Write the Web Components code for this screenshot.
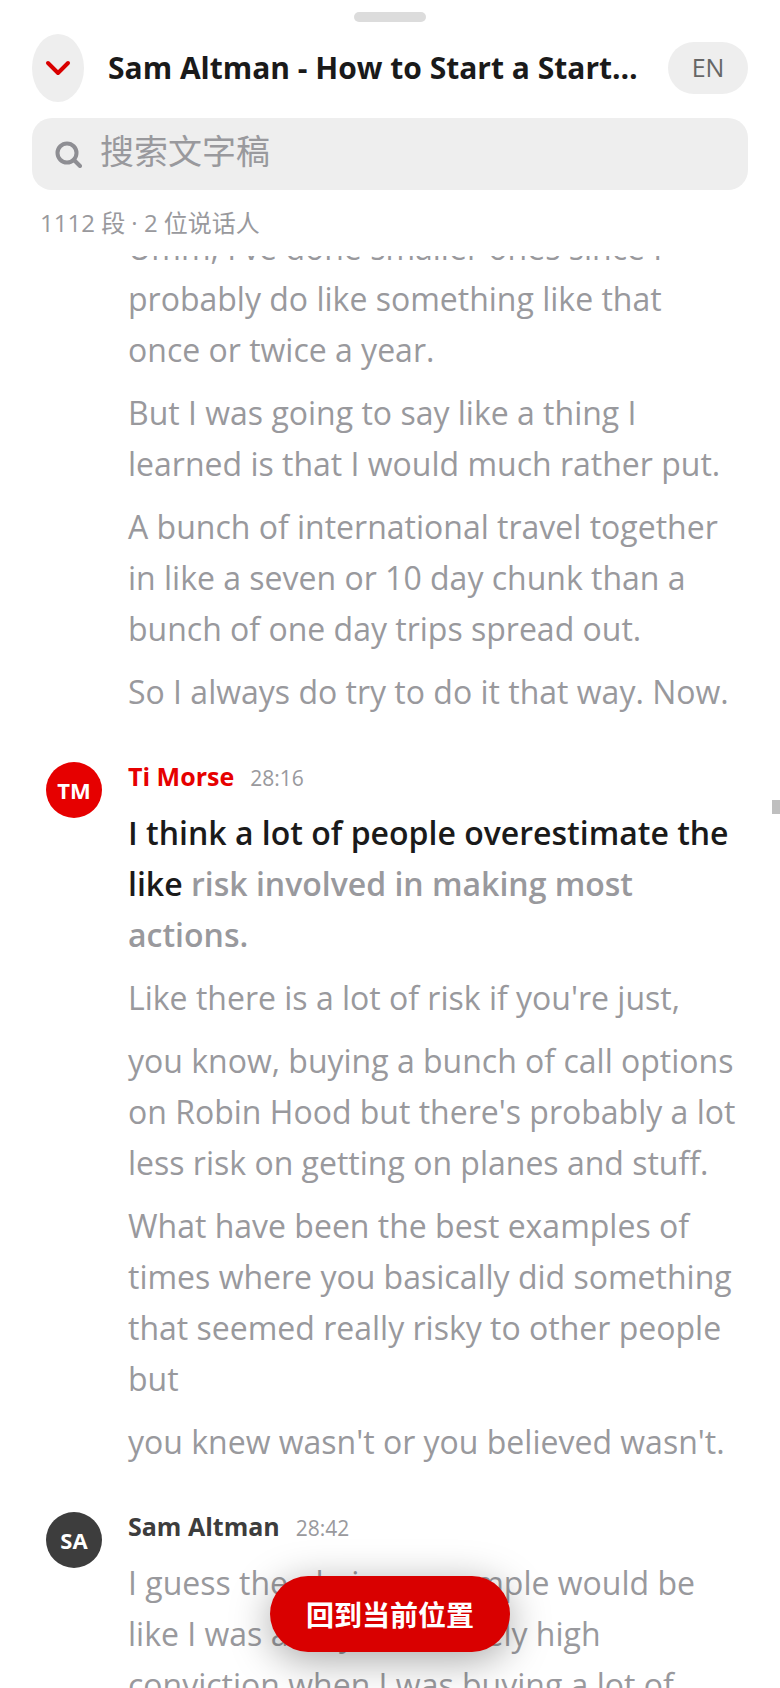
<!DOCTYPE html>
<html lang="zh-CN">
<head>
  <meta charset="UTF-8">
  <meta name="viewport" content="width=device-width, initial-scale=1.0">
  <title>Sam Altman - How to Start a Startup</title>
  <style>
    body {
      margin: 0;
      background: #fff;
      font-family: "Open Sans", "Noto Sans CJK SC", sans-serif;
    }
  </style>
</head>
<body>
  <transcript-sheet>
    <sheet-header slot="header" lang-label="EN">Sam Altman - How to Start a Startup</sheet-header>
    <transcript-search slot="header"></transcript-search>
    <transcript-stats slot="header">1112 段 · 2 位说话人</transcript-stats>

    <speaker-turn>
      <transcript-line>Umm, I've done smaller ones since I probably do like something like that once or twice a year.</transcript-line>
      <transcript-line>But I was going to say like a thing I learned is that I would much rather put.</transcript-line>
      <transcript-line>A bunch of international travel together in like a seven or 10 day chunk than a bunch of one day trips spread out.</transcript-line>
      <transcript-line>So I always do try to do it that way. Now.</transcript-line>
    </speaker-turn>

    <speaker-turn name="Ti Morse" initials="TM" time="28:16" style="--speaker: #e60000">
      <transcript-line current><span slot="spoken">I think a lot of people overestimate the like</span> risk involved in making most actions.</transcript-line>
      <transcript-line>Like there is a lot of risk if you're just,</transcript-line>
      <transcript-line>you know, buying a bunch of call options on Robin Hood but there's probably a lot less risk on getting on planes and stuff.</transcript-line>
      <transcript-line>What have been the best examples of times where you basically did something that seemed really risky to other people but</transcript-line>
      <transcript-line>you knew wasn't or you believed wasn't.</transcript-line>
    </speaker-turn>

    <speaker-turn name="Sam Altman" initials="SA" time="28:42" style="--speaker: #3d3d3d">
      <transcript-line>I guess the obvious example would be like I was always extremely high conviction when I was buying a lot of</transcript-line>
    </speaker-turn>

    <return-button slot="floating">回到当前位置</return-button>
  </transcript-sheet>

  <script>
    class BaseElement extends HTMLElement {
      constructor() {
        super();
        this.attachShadow({ mode: 'open' });
      }

      connectedCallback() {
        this.shadowRoot.innerHTML = this.render();
      }
    }

    // The whole sheet: fixed header, scrolling transcript, floating action
    class TranscriptSheet extends BaseElement {
      render() {
        return `
          <style>
            :host {
              position: relative;
              display: flex;
              flex-direction: column;
              height: 100vh;
              overflow: hidden;
            }
            header {
              padding: 12px 32px 0;
            }
            .handle {
              width: 72px;
              height: 10px;
              margin: 0 auto 12px;
              border-radius: 5px;
              background: #dcdcdc;
            }
            main {
              flex: 1;
              min-height: 0;
              overflow-y: auto;
              scrollbar-width: none;
              padding: 0 40px 0 46px;
            }
            .thumb {
              position: absolute;
              top: 800px;
              right: 0;
              width: 8px;
              height: 14px;
              background: #bfbfbf;
            }
            .floating {
              position: absolute;
              left: 0;
              right: 0;
              bottom: 36px;
              display: flex;
              justify-content: center;
            }
          </style>
          <header>
            <div class="handle"></div>
            <slot name="header"></slot>
          </header>
          <main><slot></slot></main>
          <div class="thumb"></div>
          <div class="floating"><slot name="floating"></slot></div>
        `;
      }
    }

    class SheetHeader extends BaseElement {
      render() {
        return `
          <style>
            :host {
              display: flex;
              align-items: center;
              gap: 24px;
            }
            button {
              flex: none;
              display: flex;
              align-items: center;
              justify-content: center;
              padding: 0;
              border: 0;
              background: #eee;
              font: inherit;
              cursor: pointer;
            }
            .close {
              width: 52px;
              height: 68px;
              border-radius: 50%;
            }
            .lang {
              width: 80px;
              height: 52px;
              padding-bottom: 2px;
              border-radius: 26px;
              color: #666;
              font-size: 25px;
              font-weight: 500;
            }
            h1 {
              flex: 1;
              min-width: 0;
              margin: 0;
              overflow: hidden;
              white-space: nowrap;
              text-overflow: ellipsis;
              color: #1a1a1a;
              font-size: 30px;
              line-height: 44px;
              font-weight: 700;
            }
          </style>
          <button class="close" type="button" aria-label="关闭">
            <svg width="26" height="16" viewBox="0 0 26 16" fill="none" stroke="#d90000" stroke-width="4" stroke-linecap="round" stroke-linejoin="round">
              <path d="M3 3l10 10L23 3"/>
            </svg>
          </button>
          <h1><slot></slot></h1>
          <button class="lang" type="button">${this.getAttribute('lang-label')}</button>
        `;
      }
    }

    class TranscriptSearch extends BaseElement {
      render() {
        return `
          <style>
            :host {
              display: block;
              margin-top: 16px;
            }
            label {
              display: flex;
              align-items: center;
              gap: 18px;
              height: 72px;
              padding: 0 22px;
              border-radius: 20px;
              background: #eee;
            }
            svg {
              flex: none;
            }
            input {
              flex: 1;
              min-width: 0;
              padding: 0 0 6px;
              border: 0;
              outline: 0;
              background: none;
              color: #1a1a1a;
              font: inherit;
              font-size: 34px;
              line-height: 48px;
            }
            input::placeholder {
              color: #99999d;
              opacity: 1;
            }
          </style>
          <label>
            <svg width="28" height="28" viewBox="0 0 28 28" fill="none" stroke="#8e8e93" stroke-width="4" stroke-linecap="round">
              <circle cx="13" cy="13" r="9.5"/>
              <path d="M20 20l6 6"/>
            </svg>
            <input type="text" placeholder="搜索文字稿" aria-label="搜索文字稿">
          </label>
        `;
      }
    }

    class TranscriptStats extends BaseElement {
      render() {
        return `
          <style>
            :host {
              display: block;
              padding: 17px 8px;
              color: #99999d;
              font-size: 24px;
              line-height: 32px;
            }
          </style>
          <slot></slot>
        `;
      }
    }

    // One speaker's block: avatar column on the left, lines on the right
    class SpeakerTurn extends BaseElement {
      render() {
        const name = this.getAttribute('name');
        const avatar = name ? `<div class="avatar">${this.getAttribute('initials')}</div>` : '';
        const meta = name ? `
          <div class="meta">
            <span class="name">${name}</span>
            <time>${this.getAttribute('time')}</time>
          </div>` : '';

        return `
          <style>
            :host {
              display: grid;
              grid-template-columns: 56px 1fr;
              column-gap: 26px;
              margin-bottom: 45px;
            }
            .avatar {
              display: flex;
              align-items: center;
              justify-content: center;
              height: 56px;
              border-radius: 50%;
              background: var(--speaker);
              color: #fff;
              font-size: 22px;
              font-weight: 700;
            }
            .content {
              grid-column: 2;
              min-width: 0;
            }
            .meta {
              display: flex;
              align-items: baseline;
              gap: 16px;
              margin-bottom: 15px;
              line-height: 28px;
            }
            .name {
              color: var(--speaker);
              font-size: 25px;
              font-weight: 700;
            }
            time {
              color: #99999d;
              font-size: 21px;
            }
            .lines {
              display: flex;
              flex-direction: column;
              gap: 12px;
            }
          </style>
          ${avatar}
          <div class="content">
            ${meta}
            <div class="lines"><slot></slot></div>
          </div>
        `;
      }
    }

    class TranscriptLine extends BaseElement {
      render() {
        return `
          <style>
            :host {
              display: block;
              color: #99999d;
              font-size: 32px;
              line-height: 51px;
            }
            :host([current]) {
              font-weight: 600;
            }
            .spoken {
              color: #1a1a1a;
            }
          </style>
          <span class="spoken"><slot name="spoken"></slot></span><slot></slot>
        `;
      }
    }

    class ReturnButton extends BaseElement {
      render() {
        return `
          <style>
            :host {
              display: block;
            }
            button {
              height: 76px;
              padding: 0 36px;
              border: 0;
              border-radius: 38px;
              background: #d90000;
              box-shadow: 0 8px 40px rgba(0, 0, 0, 0.35);
              color: #fff;
              font: inherit;
              font-size: 28px;
              font-weight: 700;
              cursor: pointer;
            }
          </style>
          <button type="button"><slot></slot></button>
        `;
      }
    }

    customElements.define('transcript-sheet', TranscriptSheet);
    customElements.define('sheet-header', SheetHeader);
    customElements.define('transcript-search', TranscriptSearch);
    customElements.define('transcript-stats', TranscriptStats);
    customElements.define('speaker-turn', SpeakerTurn);
    customElements.define('transcript-line', TranscriptLine);
    customElements.define('return-button', ReturnButton);

    // Open part-way through the transcript
    document.querySelector('transcript-sheet').shadowRoot.querySelector('main').scrollTop = 34;
  </script>
</body>
</html>
